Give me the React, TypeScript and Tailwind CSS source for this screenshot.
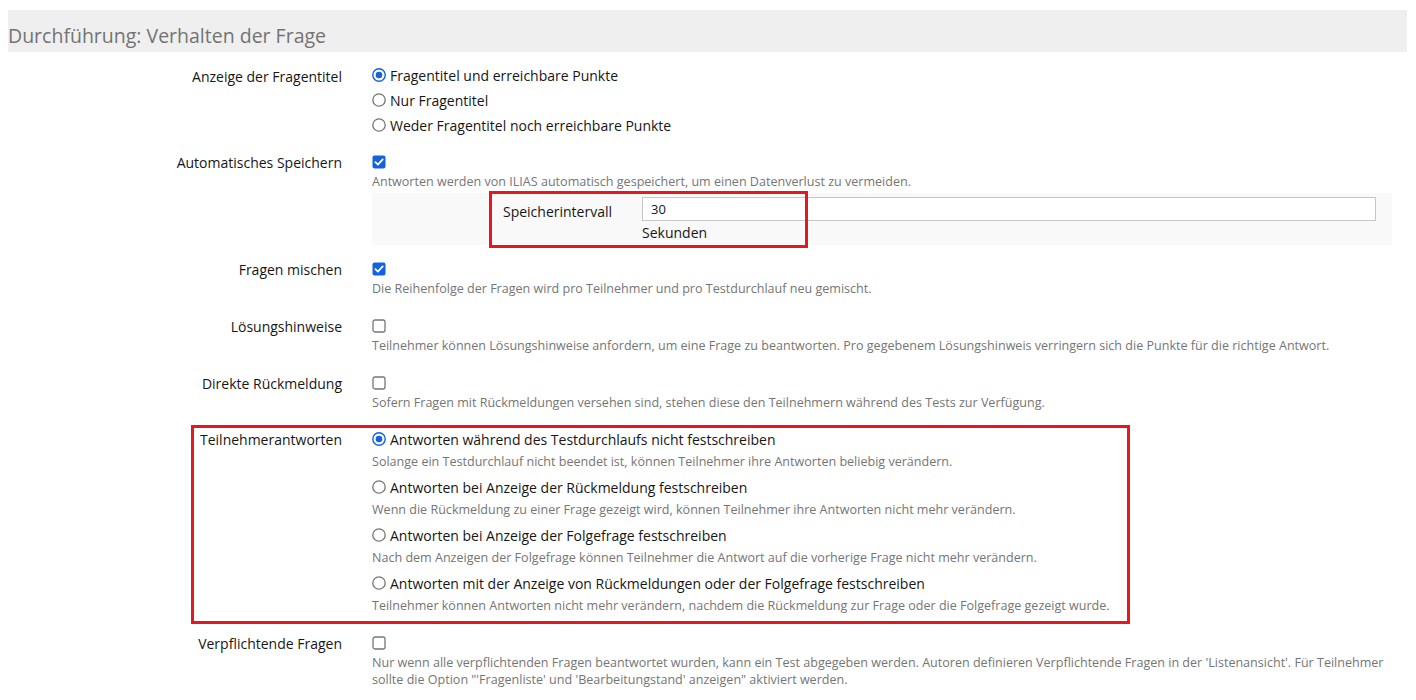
import React from "react";

const BLUE = "#1463dc";

function Radio({ checked }: { checked?: boolean }) {
  return (
    <svg width="14" height="14" viewBox="0 0 14 14" className="shrink-0">
      {checked ? (
        <>
          <circle cx="7" cy="7" r="6.2" fill="white" stroke={BLUE} strokeWidth="1.4" />
          <circle cx="7" cy="7" r="3.3" fill={BLUE} />
        </>
      ) : (
        <circle cx="7" cy="7" r="6.2" fill="white" stroke="#767676" strokeWidth="1.3" />
      )}
    </svg>
  );
}

function Check({ checked }: { checked?: boolean }) {
  return (
    <svg width="14" height="14" viewBox="0 0 14 14" className="shrink-0">
      {checked ? (
        <>
          <rect x="0.5" y="0.5" width="13" height="13" rx="2" fill={BLUE} />
          <path d="M3.4 7.2 L5.9 9.6 L10.7 4.4" fill="none" stroke="white" strokeWidth="1.8" strokeLinecap="round" strokeLinejoin="round" />
        </>
      ) : (
        <rect x="1" y="1" width="12" height="12" rx="2" fill="white" stroke="#767676" strokeWidth="1.3" />
      )}
    </svg>
  );
}

function Label({ children }: { children: React.ReactNode }) {
  return (
    <div className="w-[364px] shrink-0 pr-[30px] text-right text-[14px] leading-[20px] pt-[1px] text-[#161616]">
      {children}
    </div>
  );
}

function Help({ children, mt = "mt-[2px]" }: { children: React.ReactNode; mt?: string }) {
  return <div className={`${mt} text-[12.55px] leading-[16px] text-[#757575]`}>{children}</div>;
}

function CheckRow({
  label,
  checked,
  help,
  children,
  cls,
}: {
  label: string;
  checked?: boolean;
  help: React.ReactNode;
  children?: React.ReactNode;
  cls: string;
}) {
  return (
    <div className={`flex ${cls}`}>
      <Label>{label}</Label>
      <div className="flex-1 pr-[15px]">
        <div className="h-[20px] flex items-center">
          <Check checked={checked} />
        </div>
        <Help>{help}</Help>
        {children}
      </div>
    </div>
  );
}

export default function App() {
  const opts = [
    {
      t: "Antworten während des Testdurchlaufs nicht festschreiben",
      h: "Solange ein Testdurchlauf nicht beendet ist, können Teilnehmer ihre Antworten beliebig verändern.",
      c: true,
    },
    {
      t: "Antworten bei Anzeige der Rückmeldung festschreiben",
      h: "Wenn die Rückmeldung zu einer Frage gezeigt wird, können Teilnehmer ihre Antworten nicht mehr verändern.",
    },
    {
      t: "Antworten bei Anzeige der Folgefrage festschreiben",
      h: "Nach dem Anzeigen der Folgefrage können Teilnehmer die Antwort auf die vorherige Frage nicht mehr verändern.",
    },
    {
      t: "Antworten mit der Anzeige von Rückmeldungen oder der Folgefrage festschreiben",
      h: "Teilnehmer können Antworten nicht mehr verändern, nachdem die Rückmeldung zur Frage oder die Folgefrage gezeigt wurde.",
    },
  ];

  return (
    <div
      className="w-[1416px] h-[700px] overflow-hidden bg-white pl-[8px] pr-[9px] pt-[10px]"
      style={{ fontFamily: '"Open Sans", "Noto Sans", sans-serif' }}
    >
      <div className="h-[42px] bg-[#efefef] pt-[14px]">
        <h2 className="text-[19.5px] leading-[24px] text-[#737373] font-normal">Durchführung: Verhalten der Frage</h2>
      </div>

      <div className="w-[1399px]">
        {/* Anzeige der Fragentitel */}
        <div className="flex mt-[4px] pt-[9px] pb-[8px]">
          <Label>
            <div className="pt-[1px]">Anzeige der Fragentitel</div>
          </Label>
          <div className="flex-1 pr-[15px] flex flex-col gap-[5px]">
            {[
              ["Fragentitel und erreichbare Punkte", true],
              ["Nur Fragentitel", false],
              ["Weder Fragentitel noch erreichbare Punkte", false],
            ].map(([t, c]) => (
              <div key={t as string} className="h-[20px] flex items-center gap-[4px] text-[14px] text-[#161616]">
                <Radio checked={c as boolean} />
                <span>{t as string}</span>
              </div>
            ))}
          </div>
        </div>

        {/* Automatisches Speichern */}
        <CheckRow
          cls="pt-[9px] pb-[4px]"
          label="Automatisches Speichern"
          checked
          help="Antworten werden von ILIAS automatisch gespeichert, um einen Datenverlust zu vermeiden."
        >
          <div className="relative mt-[3px] h-[52px] bg-[#f9f9f9] flex pt-[4px]">
            <div className="w-[270px] shrink-0 pr-[30px] text-right text-[14px] leading-[20px] pt-[5px] text-[#161616]">
              Speicherintervall
            </div>
            <div className="flex-1 pr-[16px]">
              <div className="h-[24px] border border-[#c6c6c6] bg-white px-[8px] text-[13px] leading-[22px] text-[#161616]">
                30
              </div>
              <div className="mt-[2px] text-[14px] leading-[20px] text-[#161616]">Sekunden</div>
            </div>
            <div className="absolute left-[117px] top-[-2px] w-[319px] h-[57px] border-[3px] border-[#e3191f] pointer-events-none" />
          </div>
        </CheckRow>

        <CheckRow
          cls="pt-[10px] pb-[9px]"
          label="Fragen mischen"
          checked
          help="Die Reihenfolge der Fragen wird pro Teilnehmer und pro Testdurchlauf neu gemischt."
        />
        <CheckRow
          cls="pt-[10px] pb-[9px]"
          label="Lösungshinweise"
          help="Teilnehmer können Lösungshinweise anfordern, um eine Frage zu beantworten. Pro gegebenem Lösungshinweis verringern sich die Punkte für die richtige Antwort."
        />
        <CheckRow
          cls="pt-[10px] pb-[9px]"
          label="Direkte Rückmeldung"
          help="Sofern Fragen mit Rückmeldungen versehen sind, stehen diese den Teilnehmern während des Tests zur Verfügung."
        />

        {/* Teilnehmerantworten */}
        <div className="relative flex pt-[9px] pb-[9px]">
          <Label>Teilnehmerantworten</Label>
          <div className="flex-1 pr-[15px] flex flex-col gap-[7px]">
            {opts.map((o) => (
              <div key={o.t}>
                <div className="h-[20px] flex items-center gap-[4px] text-[14px] text-[#161616]">
                  <Radio checked={o.c} />
                  <span>{o.t}</span>
                </div>
                <Help mt="mt-[5px]">{o.h}</Help>
              </div>
            ))}
          </div>
          <div className="absolute left-[183px] top-[5px] w-[939px] h-[199px] border-[3px] border-[#e3191f] pointer-events-none" />
        </div>

        {/* Verpflichtende Fragen */}
        <div className="flex pt-[10px] pb-[9px]">
          <Label>Verpflichtende Fragen</Label>
          <div className="flex-1 pr-[15px]">
            <div className="h-[20px] flex items-center">
              <Check />
            </div>
            <div className="mt-[1px] text-[12.55px] leading-[17px] text-[#757575]">
              Nur wenn alle verpflichtenden Fragen beantwortet wurden, kann ein Test abgegeben werden. Autoren definieren Verpflichtende Fragen in der 'Listenansicht'. Für Teilnehmer
              <br />
              sollte die Option "'Fragenliste' und 'Bearbeitungstand' anzeigen" aktiviert werden.
            </div>
          </div>
        </div>
      </div>
    </div>
  );
}
